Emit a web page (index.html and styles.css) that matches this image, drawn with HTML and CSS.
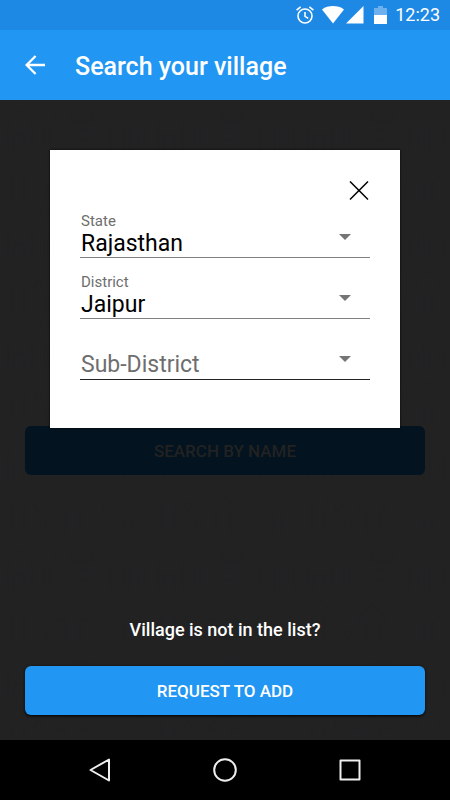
FILE: index.html
```html
<!DOCTYPE html>
<html lang="en">
<head>
<meta charset="utf-8">
<meta name="viewport" content="width=device-width, initial-scale=1">
<title>Search your village</title>
<link rel="stylesheet" href="styles.css">
</head>
<body>
<div class="status-bar">
  <svg class="status-alarm" width="20" height="20" viewBox="0 0 20 20" fill="none" stroke="currentColor" stroke-width="1.6" aria-hidden="true">
    <circle cx="10" cy="11" r="7"/>
    <path d="M10 7v4.4l3.2 2M1.6 5.2 5.6 1.8M18.4 5.2l-4-3.4"/>
  </svg>
  <svg class="status-wifi" width="22" height="18" viewBox="0 0 22 18" fill="currentColor" aria-hidden="true">
    <path d="M0 3.4C6.400 -1 15.600 -1 22 3.400L11 17.500Z"/>
  </svg>
  <svg class="status-signal" width="18" height="18" viewBox="0 0 18 18" fill="currentColor" aria-hidden="true">
    <path d="M17.500 0v17.500H0Z"/>
  </svg>
  <svg class="status-battery" width="13" height="18" viewBox="0 0 13 18" fill="currentColor" aria-hidden="true">
    <path opacity=".35" d="M0 2h4V0h5v2h4v7H0Z"/>
    <path d="M0 9h13v9H0Z"/>
  </svg>
  <time class="clock">12:23</time>
</div>

<header class="app-bar">
  <button class="icon-button" type="button" aria-label="Back">
    <svg width="20" height="20" viewBox="0 0 20 20" fill="none" stroke="currentColor" stroke-width="2.300" aria-hidden="true">
      <path d="M20 10H2M10.600 1 1.600 10l9 9"/>
    </svg>
  </button>
  <h1 class="title">Search your village</h1>
</header>

<main class="screen">
  <svg class="backdrop" aria-hidden="true">
    <defs>
      <pattern id="village" width="150" height="110" patternUnits="userSpaceOnUse">
        <g fill="none" stroke="#1e2021">
          <path d="M8 50V22L20 8l12 14v28M14 50V34h10v16M44 46V24c-12-6-8-20 2-20s14 14 4 20v22"/>
          <path d="M70 12h24M72 12v10h20V12M66 44l8-14M98 44l-8-14M76 30h12v10H76"/>
          <path d="M110 50V28c2-14 12-14 14 0v22M130 50V28c2-14 12-14 14 0v22M118 34v6M138 34v6"/>
          <path d="M12 102V74c-8-8 0-16 8-14s10 10 4 16v26M38 70q6 4 0 12q-6-6 0-12M48 88q6 4 0 12q-6-6 0-12"/>
          <path d="M66 104V80H56l16-16 16 16H80v24M98 66c12 4 12 18 0 22M108 64c-8 8-4 24 4 40"/>
          <path d="M124 104V84c-10-4-8-22 4-22s14 18 4 22v20M142 66q5 5-2 12q-4-6 2-12"/>
        </g>
      </pattern>
    </defs>
    <rect width="100%" height="100%" fill="url(#village)"/>
  </svg>
  <button class="button button-dimmed" type="button">SEARCH BY NAME</button>
  <p class="hint">Village is not in the list?</p>
  <button class="button" type="button">REQUEST TO ADD</button>

  <section class="dialog" role="dialog" aria-label="Choose location">
    <button class="icon-button close" type="button" aria-label="Close">
      <svg width="21" height="20" viewBox="0 0 21 20" fill="none" stroke="currentColor" stroke-width="1.500" aria-hidden="true">
        <path d="M1 0.500l18 18M19 0.500 1 18.500"/>
      </svg>
    </button>
    <div class="field">
      <label class="label" for="state">State</label>
      <select class="select" id="state"><option>Rajasthan</option></select>
      <svg class="caret" width="12" height="6" viewBox="0 0 12 6" aria-hidden="true"><path d="M0 0h12L6 6Z"/></svg>
    </div>
    <div class="field">
      <label class="label" for="district">District</label>
      <select class="select" id="district"><option>Jaipur</option></select>
      <svg class="caret" width="12" height="6" viewBox="0 0 12 6" aria-hidden="true"><path d="M0 0h12L6 6Z"/></svg>
    </div>
    <div class="field field-empty">
      <select class="select" id="sub-district" aria-label="Sub-District"><option>Sub-District</option></select>
      <svg class="caret" width="12" height="6" viewBox="0 0 12 6" aria-hidden="true"><path d="M0 0h12L6 6Z"/></svg>
    </div>
  </section>
</main>

<nav class="nav-bar" aria-label="System">
  <button class="icon-button" type="button" aria-label="Back">
    <svg width="24" height="24" viewBox="0 0 24 24" fill="none" stroke="currentColor" stroke-width="2" stroke-linejoin="round" aria-hidden="true"><path d="M21 1.500v21L2.500 12Z"/></svg>
  </button>
  <button class="icon-button" type="button" aria-label="Home">
    <svg width="24" height="24" viewBox="0 0 24 24" fill="none" stroke="currentColor" stroke-width="2" aria-hidden="true"><circle cx="12" cy="12" r="10.800"/></svg>
  </button>
  <button class="icon-button" type="button" aria-label="Recent apps">
    <svg width="24" height="24" viewBox="0 0 24 24" fill="none" stroke="currentColor" stroke-width="2" stroke-linejoin="round" aria-hidden="true"><path d="M2.500 2.500h19v19h-19Z"/></svg>
  </button>
</nav>
</body>
</html>
```
FILE: styles.css
```css
* {
  box-sizing: border-box;
}

body {
  margin: 0;
  min-height: 100vh;
  display: flex;
  flex-direction: column;
  background: #222;
  color: #fff;
  font-family: Roboto, "Liberation Sans", sans-serif;
}

button,
select {
  margin: 0;
  padding: 0;
  border: 0;
  background: none;
  color: inherit;
  font: inherit;
}

svg {
  display: block;
}

.icon-button {
  display: block;
}

.status-bar {
  display: flex;
  justify-content: flex-end;
  align-items: center;
  height: 30px;
  padding: 0 10px;
  background: #1e88e5;
}

.status-alarm {
  margin-right: 7px;
}

.status-wifi {
  margin-right: 2px;
}

.status-signal {
  margin-right: 10px;
}

.status-battery {
  margin-right: 8px;
}

.clock {
  font-size: 18px;
  line-height: 32px;
}

.app-bar {
  display: flex;
  align-items: center;
  gap: 30px;
  height: 70px;
  padding: 0 25px;
  background: #2196f3;
}

.title {
  margin: 0;
  padding-top: 3px;
  font-size: 25px;
  font-weight: 500;
  line-height: 32px;
}

.screen {
  position: relative;
  isolation: isolate;
  flex: 1;
  display: flex;
  flex-direction: column;
  padding: 326px 25px 25px;
}

.backdrop {
  position: absolute;
  inset: 0;
  z-index: -1;
  width: 100%;
  height: 100%;
}

.button {
  height: 49px;
  padding-top: 1px;
  border-radius: 6px;
  background: #2196f3;
  box-shadow: 0 1px 3px #000;
  font-size: 17px;
  font-weight: 500;
}

.button-dimmed {
  background: #03131f;
  box-shadow: none;
  color: #222;
}

.hint {
  margin: auto 0 24px;
  font-size: 18px;
  font-weight: 500;
  line-height: 24px;
  text-align: center;
}

.dialog {
  position: absolute;
  top: 50px;
  left: 50px;
  right: 50px;
  padding: 31px 30px 48px;
  background: #fff;
  box-shadow: 0 0 2px #000;
  color: #000;
}

.close {
  margin-left: auto;
}

.field {
  position: relative;
  display: flex;
  flex-direction: column;
  justify-content: flex-end;
  height: 61px;
  border-bottom: 1px solid #808080;
}

.close + .field {
  height: 57px;
}

.label {
  padding-left: 1px;
  color: #6e6e6e;
  font-size: 15px;
  line-height: 20px;
}

.select {
  width: 100%;
  height: 26px;
  padding: 0 32px 0 1px;
  appearance: none;
  font-size: 23px;
  line-height: 26px;
}

.caret {
  position: absolute;
  right: 19px;
  bottom: 17px;
  fill: #757575;
  pointer-events: none;
}

.field-empty {
  border-color: #222;
}

.field-empty .select {
  height: 28px;
  line-height: 28px;
  color: #6e6e6e;
}

.nav-bar {
  display: flex;
  justify-content: center;
  align-items: center;
  gap: 101px;
  height: 60px;
  background: #000;
  color: #eee;
}
```
